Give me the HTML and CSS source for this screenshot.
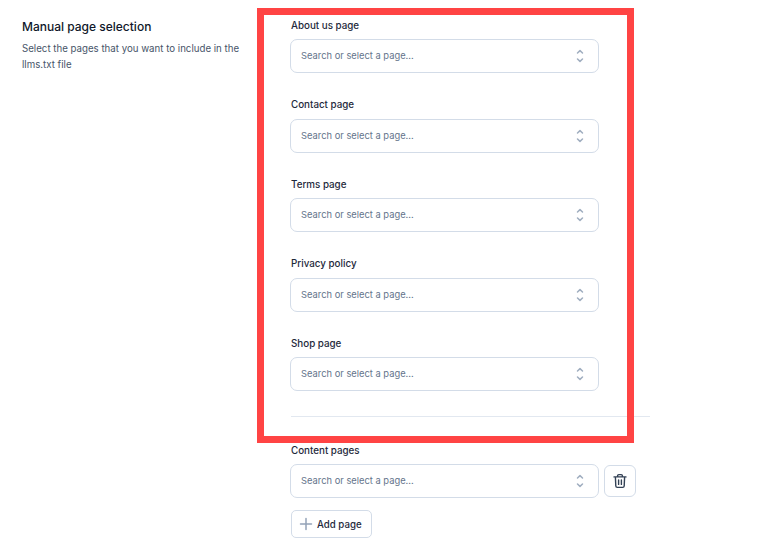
FILE: index.html
```html
<!DOCTYPE html>
<html lang="en">
<head>
    <meta charset="UTF-8">
    <title>Manual page selection</title>
    <link rel="stylesheet" href="styles.css">
</head>
<body>
    <svg width="0" height="0" class="defs">
        <symbol id="chevrons" viewBox="0 0 16 16">
            <path d="M5.5 5 L8 2.6 L10.5 5 M5.5 11 L8 13.4 L10.5 11" fill="none" stroke="currentColor" stroke-width="1.5" stroke-linecap="round" stroke-linejoin="round"/>
        </symbol>
    </svg>

    <div class="page">
        <div class="intro">
            <h2>Manual page selection</h2>
            <p>Select the pages that you want to include in the llms.txt file</p>
        </div>

        <div class="fields">
            <div class="field">
                <label>About us page</label>
                <div class="select"><span>Search or select a page...</span><svg class="chevrons"><use href="#chevrons"/></svg></div>
            </div>
            <div class="field">
                <label>Contact page</label>
                <div class="select"><span>Search or select a page...</span><svg class="chevrons"><use href="#chevrons"/></svg></div>
            </div>
            <div class="field">
                <label>Terms page</label>
                <div class="select"><span>Search or select a page...</span><svg class="chevrons"><use href="#chevrons"/></svg></div>
            </div>
            <div class="field">
                <label>Privacy policy</label>
                <div class="select"><span>Search or select a page...</span><svg class="chevrons"><use href="#chevrons"/></svg></div>
            </div>
            <div class="field">
                <label>Shop page</label>
                <div class="select"><span>Search or select a page...</span><svg class="chevrons"><use href="#chevrons"/></svg></div>
            </div>

            <hr class="divider">

            <div class="field content-pages">
                <label>Content pages</label>
                <div class="select-row">
                    <div class="select"><span>Search or select a page...</span><svg class="chevrons"><use href="#chevrons"/></svg></div>
                    <div class="icon-button">
                        <svg width="16" height="16" viewBox="0 0 16 16" fill="none" stroke="currentColor" stroke-width="1.4" stroke-linecap="round" stroke-linejoin="round">
                            <path d="M2 3.9 H14 M5.6 3.7 V2.8 A1.2 1.2 0 0 1 6.8 1.6 H9.2 A1.2 1.2 0 0 1 10.4 2.8 V3.7 M3.4 4 L3.8 13 A1.5 1.5 0 0 0 5.3 14.4 H10.7 A1.5 1.5 0 0 0 12.2 13 L12.6 4 M6.6 7 V11.4 M9.4 7 V11.4"/>
                        </svg>
                    </div>
                </div>
                <div class="add-page">
                    <svg width="14" height="14" viewBox="0 0 14 14" fill="none" stroke="currentColor" stroke-width="1.5" stroke-linecap="round">
                        <path d="M7 1.5 V12.5 M1.5 7 H12.5"/>
                    </svg>
                    <span>Add page</span>
                </div>
            </div>
        </div>
    </div>

    <div class="highlight"></div>
</body>
</html>
```

FILE: styles.css
```css
body {
    font-family: Inter, "Noto Sans", sans-serif;
    background-color: #fff;
    margin: 0;
    padding: 0;
    color: #1e293b;
    overflow: hidden;
}

.defs {
    position: absolute;
}

.page {
    display: flex;
    padding: 18.5px 0 0 22px;
}

.intro {
    width: 269px;
    flex-shrink: 0;
}

.intro h2 {
    margin: 0.5px 0 0;
    font-size: 12px;
    line-height: 16px;
    font-weight: 500;
    color: #0f172a;
}

.intro p {
    width: 225px;
    margin: 6px 0 0;
    font-size: 9.7px;
    line-height: 16px;
    color: #475569;
}

.fields {
    width: 359px;
}

.field {
    width: 308px;
    margin-bottom: 25px;
}

.field label {
    display: block;
    font-size: 9.8px;
    line-height: 14px;
    font-weight: 500;
    margin-bottom: 6.5px;
}

.select {
    box-sizing: border-box;
    width: 309px;
    height: 34px;
    margin-left: -1px;
    display: flex;
    align-items: center;
    justify-content: space-between;
    padding: 0 10px 0 10px;
    border: 1px solid #d3dce8;
    border-radius: 7px;
    font-size: 9.35px;
    color: #64748b;
}

.select span {
    padding-bottom: 1px;
}

.chevrons {
    width: 16px;
    height: 16px;
    color: #a0aec0;
}

.divider {
    border: none;
    border-top: 1px solid #e2e8f0;
    margin: 0 0 26.5px;
}

.content-pages {
    width: 359px;
}

.select-row {
    display: flex;
    align-items: center;
    gap: 5px;
}

.icon-button {
    box-sizing: border-box;
    width: 32px;
    height: 32px;
    display: flex;
    align-items: center;
    justify-content: center;
    border: 1px solid #d3dce8;
    border-radius: 6px;
    color: #334155;
}

.add-page {
    box-sizing: border-box;
    display: inline-flex;
    align-items: center;
    gap: 4px;
    height: 28px;
    margin-top: 12px;
    padding: 0 9px 0 7px;
    border: 1px solid #d3dce8;
    border-radius: 5px;
    font-size: 9.7px;
    font-weight: 500;
}

.add-page svg {
    color: #94a3b8;
}

.highlight {
    position: absolute;
    left: 257px;
    top: 8px;
    width: 377px;
    height: 435px;
    box-sizing: border-box;
    border: 7px solid #ff4444;
}
```
